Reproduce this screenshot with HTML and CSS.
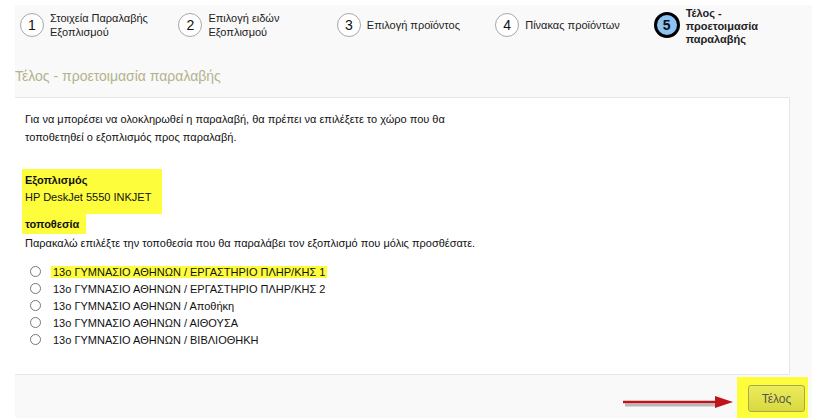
FILE: index.html
```html
<!DOCTYPE html>
<html lang="el">

<head>
    <meta charset="UTF-8">
    <title>Τέλος - προετοιμασία παραλαβής</title>
    <link rel="stylesheet" href="styles.css">
</head>

<body>

    <div class="panel">
        <div class="steps">
            <div class="step">
                <span class="num">1</span>
                <span class="step-label">Στοιχεία Παραλαβής<br>Εξοπλισμού</span>
            </div>
            <div class="step">
                <span class="num">2</span>
                <span class="step-label">Επιλογή ειδών<br>Εξοπλισμού</span>
            </div>
            <div class="step">
                <span class="num">3</span>
                <span class="step-label">Επιλογή προϊόντος</span>
            </div>
            <div class="step">
                <span class="num">4</span>
                <span class="step-label">Πίνακας προϊόντων</span>
            </div>
            <div class="step active">
                <span class="num">5</span>
                <span class="step-label">Τέλος -<br>προετοιμασία<br>παραλαβής</span>
            </div>
        </div>

        <h2 class="title">Τέλος - προετοιμασία παραλαβής</h2>

        <div class="box">
            <p class="intro">Για να μπορέσει να ολοκληρωθεί η παραλαβή, θα πρέπει να επιλέξετε το χώρο που θα<br>τοποθετηθεί ο εξοπλισμός προς παραλαβή.</p>

            <div class="mark equip">
                <div class="field-title">Εξοπλισμός</div>
                <div>HP DeskJet 5550 INKJET</div>
            </div>
            <div class="mark place">
                <div class="field-title">τοποθεσία</div>
            </div>
            <p class="hint">Παρακαλώ επιλέξτε την τοποθεσία που θα παραλάβει τον εξοπλισμό που μόλις προσθέσατε.</p>

            <div class="options">
                <label class="option"><input type="radio" name="loc"><span class="hl">13ο ΓΥΜΝΑΣΙΟ ΑΘΗΝΩΝ / ΕΡΓΑΣΤΗΡΙΟ ΠΛΗΡ/ΚΗΣ 1</span></label>
                <label class="option"><input type="radio" name="loc"><span>13ο ΓΥΜΝΑΣΙΟ ΑΘΗΝΩΝ / ΕΡΓΑΣΤΗΡΙΟ ΠΛΗΡ/ΚΗΣ 2</span></label>
                <label class="option"><input type="radio" name="loc"><span>13ο ΓΥΜΝΑΣΙΟ ΑΘΗΝΩΝ / Αποθήκη</span></label>
                <label class="option"><input type="radio" name="loc"><span>13ο ΓΥΜΝΑΣΙΟ ΑΘΗΝΩΝ / ΑΙΘΟΥΣΑ</span></label>
                <label class="option"><input type="radio" name="loc"><span>13ο ΓΥΜΝΑΣΙΟ ΑΘΗΝΩΝ / ΒΙΒΛΙΟΘΗΚΗ</span></label>
            </div>
        </div>

        <div class="footer">
            <svg class="arrow" width="112" height="16" viewBox="0 0 112 16">
                <line x1="2" y1="10" x2="96" y2="10" stroke="#b8b8b8" stroke-width="3"/>
                <line x1="0" y1="7" x2="94" y2="7" stroke="#c0141c" stroke-width="2.5"/>
                <polygon points="92,1 110,7 92,13" fill="#c0141c"/>
            </svg>
            <div class="btn-mark">
                <button class="btn-finish">Τέλος</button>
            </div>
        </div>
    </div>

</body>

</html>
```

FILE: styles.css
```css
body {
    margin: 0;
    background: #fff;
    font-family: "Liberation Sans", Arial, sans-serif;
    color: #111;
}

.panel {
    margin: 5px 8px 0 15px;
    height: 413px;
    background: #f9f9f9;
}

.steps {
    display: flex;
    height: 50px;
    padding: 8px 0 0 5px;
    box-sizing: border-box;
}

.step {
    width: 159px;
    display: flex;
    align-items: center;
    gap: 6px;
    height: 24px;
}

.num {
    width: 22px;
    height: 22px;
    border: 1px solid #a8a8a8;
    border-radius: 50%;
    background: #fff;
    display: flex;
    align-items: center;
    justify-content: center;
    font-size: 14px;
    flex-shrink: 0;
}

.step-label {
    font-size: 11px;
    line-height: 14px;
    color: #222;
}

.step.active .num {
    width: 20px;
    height: 20px;
    border: 3px solid #000;
    background: #8cc4f4;
    font-weight: bold;
}

.step.active .step-label {
    font-weight: bold;
    line-height: 13px;
    padding-top: 3px;
}

.title {
    margin: 0;
    padding: 13px 0 0 0;
    height: 42px;
    box-sizing: border-box;
    font-size: 14px;
    font-weight: normal;
    color: #b3b38c;
}

.box {
    background: #fff;
    border: 1px solid #e6e6e6;
    border-left: none;
    margin-right: 22px;
    height: 278px;
    box-sizing: border-box;
    padding: 12px 10px 0 10px;
    font-size: 11px;
}

.intro {
    margin: 0;
    line-height: 18px;
}

.mark {
    background: #fdfd3c;
    padding: 0 3px;
    margin-left: -3px;
    white-space: nowrap;
}

.equip {
    margin-top: 23px;
    padding-top: 3px;
    padding-bottom: 8px;
    width: 134px;
    line-height: 17px;
}

.place {
    width: 58px;
    padding-top: 2px;
    padding-bottom: 1px;
    line-height: 17px;
}

.field-title {
    font-weight: bold;
}

.hint {
    margin: 1px 0 0 0;
    line-height: 16px;
}

.options {
    margin-top: 12px;
    display: flex;
    flex-direction: column;
}

.option {
    display: flex;
    align-items: center;
    height: 17px;
    margin-left: 4px;
}

.option input {
    width: 11px;
    height: 11px;
    margin: 0 12px 0 1px;
}

.hl {
    background: #fdfd3c;
    padding: 0 2px;
    margin-left: -2px;
}

.footer {
    display: flex;
    justify-content: flex-end;
    align-items: flex-start;
    height: 43px;
}

.arrow {
    margin-top: 20px;
    margin-right: 2px;
}

.btn-mark {
    background: #fdfd3c;
    padding: 8px 3px 6px 11px;
    margin-top: 2px;
    margin-right: 4px;
}

.btn-finish {
    width: 57px;
    height: 27px;
    border: 1px solid #a8a850;
    border-radius: 3px;
    background: linear-gradient(#ecec5c, #d8d83e);
    color: #555;
    font-family: "Liberation Sans", Arial, sans-serif;
    font-size: 12px;
    cursor: pointer;
}
```
